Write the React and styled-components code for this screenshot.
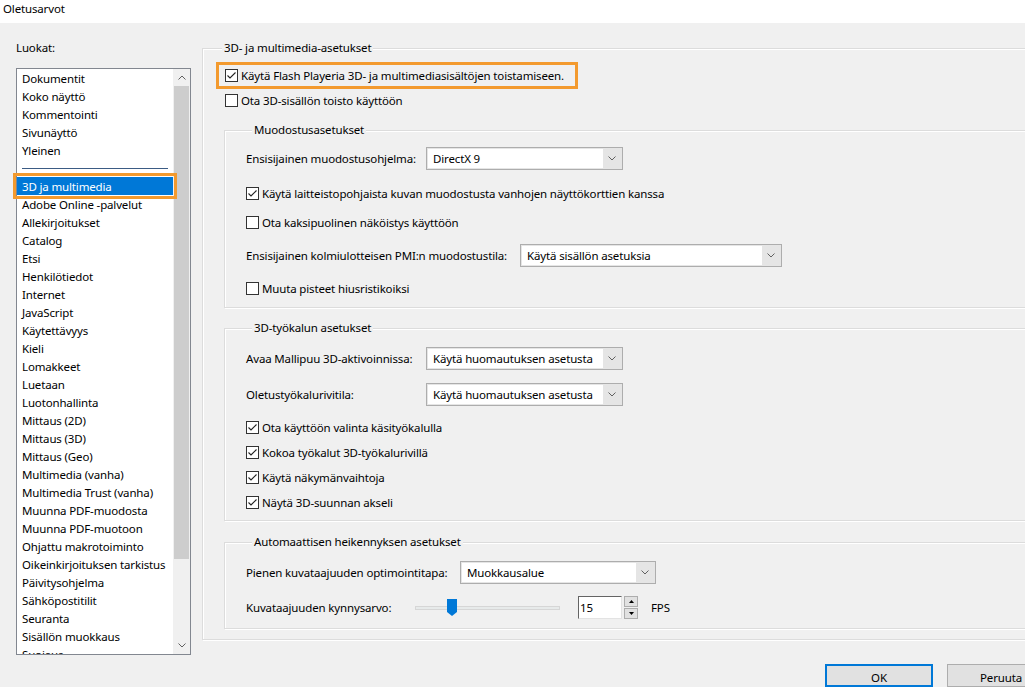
import React from 'react'
import styled, { createGlobalStyle } from 'styled-components'

const GlobalStyle = createGlobalStyle`
html, body {
  margin: 0;
  padding: 0;
}
body {
  width: 1025px;
  height: 687px;
  overflow: hidden;
  background: #f0f0f0;
  font-family: "Segoe UI", "Noto Sans", sans-serif;
  font-size: 11.5px;
  letter-spacing: -0.15px;
  color: #000;
}
`

const Window = styled.div`
width: 1025px;
height: 687px;
overflow: hidden;
display: flex;
flex-direction: column;
`

const TitleBar = styled.div`
height: 23px;
box-sizing: border-box;
background: #fff;
padding: 1px 0 0 3px;
line-height: 16px;
`

const Main = styled.div`
display: flex;
align-items: flex-start;
padding-left: 16px;
`

const LeftColumn = styled.div`
width: 175px;
flex-shrink: 0;
padding-top: 17px;
`

const Caption = styled.div`
line-height: 16px;
`

const ListBox = styled.div`
margin-top: 12px;
width: 175px;
height: 587px;
box-sizing: border-box;
border: 1px solid #828790;
background: #fff;
display: flex;
`

const Items = styled.div`
flex: 1;
height: 585px;
clip-path: inset(-8px -8px 0 -8px);
`

const Item = styled.div`
height: 18px;
line-height: 19px;
padding-left: 5px;
white-space: nowrap;
${p => p.$selected && `
  background: #0078d7;
  color: #fff;
  outline: 3px solid #f39a2e;
  outline-offset: 1px;
`}
`

const Divider = styled.div`
height: 18px;
display: flex;
align-items: center;
padding: 0 5px;
&::after {
  content: "";
  flex: 1;
  height: 1px;
  background: #3b5b84;
}
`

const ScrollBar = styled.div`
width: 17px;
background: #f0f0f0;
display: flex;
flex-direction: column;
`

const ScrollArrow = styled.div`
height: 17px;
display: flex;
align-items: center;
justify-content: center;
`

const Thumb = styled.div`
height: 473px;
margin: 0 1px;
background: #cdcdcd;
`

const Spacer = styled.div`
flex: 1;
`

const RightColumn = styled.div`
width: 900px;
flex-shrink: 0;
margin-left: 11px;
padding-top: 25px;
`

const Group = styled.div`
border: 1px solid #dcdcdc;
box-shadow: inset 1px 1px 0 #fff, 1px 1px 0 #fff;
margin-top: ${p => p.$top || 0}px;
margin-left: ${p => p.$left || 0}px;
padding: 0 0 ${p => p.$bottom || 0}px ${p => p.$pad || 0}px;
`

const GroupTitle = styled.div`
width: fit-content;
margin: -9px 0 0 ${p => p.$offset}px;
padding: 0 2px;
background: #f0f0f0;
line-height: 16px;
`

const Highlight = styled.div`
width: 362px;
height: 27px;
box-sizing: border-box;
margin-top: 6px;
border: 3px solid #f39a2e;
padding-left: 6px;
display: flex;
align-items: center;
`

const CheckRow = styled.label`
display: flex;
align-items: center;
height: 18px;
margin-top: ${p => p.$top || 0}px;
margin-left: ${p => p.$left || 0}px;
white-space: nowrap;
`

const Box = styled.span`
width: 13px;
height: 13px;
box-sizing: border-box;
border: 1px solid #333;
background: #fff;
margin-right: 3px;
display: flex;
align-items: center;
justify-content: center;
flex-shrink: 0;
`

const FieldRow = styled.div`
display: flex;
align-items: center;
height: 23px;
margin-top: ${p => p.$top || 0}px;
white-space: nowrap;
`

const FieldLabel = styled.div`
width: ${p => p.$width}px;
flex-shrink: 0;
`

const Select = styled.div`
width: ${p => p.$width}px;
height: 23px;
box-sizing: border-box;
border: 1px solid #adadad;
background: #e5e5e5;
padding: 1px;
display: flex;
`

const SelectValue = styled.div`
flex: 1;
background: #fff;
padding-left: 5px;
line-height: 19px;
`

const SelectArrow = styled.div`
width: 18px;
display: flex;
align-items: center;
justify-content: center;
`

const Slider = styled.div`
position: relative;
width: 145px;
height: 23px;
display: flex;
align-items: center;
`

const Track = styled.div`
width: 100%;
height: 2px;
background: #e7eaea;
border: 1px solid #d6d6d6;
`

const SliderThumb = styled.svg`
position: absolute;
top: 3px;
`

const NumberBox = styled.div`
margin-left: 18px;
width: 44px;
height: 23px;
box-sizing: border-box;
background: #fff;
border: 1px solid #e3e3e3;
border-top-color: #646464;
border-left-color: #646464;
padding-left: 1px;
line-height: 21px;
`

const Spin = styled.div`
margin-left: 2px;
width: 14px;
display: flex;
flex-direction: column;
gap: 1px;
`

const SpinButton = styled.div`
height: 11px;
box-sizing: border-box;
background: #e1e1e1;
border: 1px solid #adadad;
display: flex;
align-items: center;
justify-content: center;
`

const Unit = styled.span`
margin-left: 13px;
`

const ButtonRow = styled.div`
display: flex;
gap: 14px;
margin-top: 24px;
padding-left: 623px;
`

const Button = styled.div`
width: 108px;
height: 23px;
box-sizing: border-box;
padding-top: 3px;
background: #e1e1e1;
border: ${p => p.$primary ? '2px solid #0078d7' : '1px solid #adadad'};
display: flex;
align-items: center;
justify-content: center;
`

const Chevron = ({ up }) => (
  <svg width="8" height="5" viewBox="0 0 8 5">
    <path d={up ? 'M0.5 4.5 L4 1 L7.5 4.5' : 'M0.5 0.5 L4 4 L7.5 0.5'} fill="none" stroke="#606060" strokeWidth="1" />
  </svg>
)

const Check = ({ checked, children, top, left }) => (
  <CheckRow $top={top} $left={left}>
    <Box>
      {checked && (
        <svg width="11" height="11" viewBox="0 0 11 11">
          <path d="M1.5 5.5 L4 8 L9.5 2.5" fill="none" stroke="#222" strokeWidth="1.1" />
        </svg>
      )}
    </Box>
    {children}
  </CheckRow>
)

const Dropdown = ({ label, labelWidth, value, width, top }) => (
  <FieldRow $top={top}>
    <FieldLabel $width={labelWidth}>{label}</FieldLabel>
    <Select $width={width}>
      <SelectValue>{value}</SelectValue>
      <SelectArrow><Chevron /></SelectArrow>
    </Select>
  </FieldRow>
)

const before = ['Dokumentit', 'Koko näyttö', 'Kommentointi', 'Sivunäyttö', 'Yleinen']
const after = [
  'Adobe Online -palvelut', 'Allekirjoitukset', 'Catalog', 'Etsi', 'Henkilötiedot',
  'Internet', 'JavaScript', 'Käytettävyys', 'Kieli', 'Lomakkeet', 'Luetaan',
  'Luotonhallinta', 'Mittaus (2D)', 'Mittaus (3D)', 'Mittaus (Geo)', 'Multimedia (vanha)',
  'Multimedia Trust (vanha)', 'Muunna PDF-muodosta', 'Muunna PDF-muotoon',
  'Ohjattu makrotoiminto', 'Oikeinkirjoituksen tarkistus', 'Päivitysohjelma',
  'Sähköpostitilit', 'Seuranta', 'Sisällön muokkaus', 'Suojaus',
]

const threshold = 15

export default function App() {
  return (
    <Window>
      <GlobalStyle />
      <TitleBar>Oletusarvot</TitleBar>
      <Main>
        <LeftColumn>
          <Caption>Luokat:</Caption>
          <ListBox>
            <Items>
              {before.map(t => <Item key={t}>{t}</Item>)}
              <Divider />
              <Item $selected>3D ja multimedia</Item>
              {after.map(t => <Item key={t}>{t}</Item>)}
            </Items>
            <ScrollBar>
              <ScrollArrow><Chevron up /></ScrollArrow>
              <Thumb />
              <Spacer />
              <ScrollArrow><Chevron /></ScrollArrow>
            </ScrollBar>
          </ListBox>
        </LeftColumn>

        <RightColumn>
          <Group $pad={13} $bottom={10}>
            <GroupTitle $offset={6}>3D- ja multimedia-asetukset</GroupTitle>
            <Highlight>
              <Check checked>Käytä Flash Playeria 3D- ja multimediasisältöjen toistamiseen.</Check>
            </Highlight>
            <Check top={2} left={9}>Ota 3D-sisällön toisto käyttöön</Check>

            <Group $top={21} $left={8} $pad={21} $bottom={10}>
              <GroupTitle $offset={6}>Muodostusasetukset</GroupTitle>
              <Dropdown top={9} label="Ensisijainen muodostusohjelma:" labelWidth={180} value="DirectX 9" width={197} />
              <Check checked top={14}>Käytä laitteistopohjaista kuvan muodostusta vanhojen näyttökorttien kanssa</Check>
              <Check top={11}>Ota kaksipuolinen näköistys käyttöön</Check>
              <Dropdown top={13} label="Ensisijainen kolmiulotteisen PMI:n muodostustila:" labelWidth={274} value="Käytä sisällön asetuksia" width={262} />
              <Check top={12}>Muuta pisteet hiusristikoiksi</Check>
            </Group>

            <Group $top={20} $left={8} $pad={21} $bottom={9}>
              <GroupTitle $offset={6}>3D-työkalun asetukset</GroupTitle>
              <Dropdown top={11} label="Avaa Mallipuu 3D-aktivoinnissa:" labelWidth={180} value="Käytä huomautuksen asetusta" width={197} />
              <Dropdown top={13} label="Oletustyökalurivitila:" labelWidth={180} value="Käytä huomautuksen asetusta" width={197} />
              <Check checked top={12}>Ota käyttöön valinta käsityökalulla</Check>
              <Check checked top={7}>Kokoa työkalut 3D-työkalurivillä</Check>
              <Check checked top={7}>Käytä näkymänvaihtoja</Check>
              <Check checked top={7}>Näytä 3D-suunnan akseli</Check>
            </Group>

            <Group $top={21} $left={8} $pad={21} $bottom={9}>
              <GroupTitle $offset={6}>Automaattisen heikennyksen asetukset</GroupTitle>
              <Dropdown top={11} label="Pienen kuvataajuuden optimointitapa:" labelWidth={214} value="Muokkausalue" width={196} />
              <FieldRow $top={12}>
                <FieldLabel $width={169}>Kuvataajuuden kynnysarvo:</FieldLabel>
                <Slider>
                  <Track />
                  <SliderThumb width="10" height="17" viewBox="0 0 10 17" style={{ left: threshold * 2.1 }}>
                    <path d="M0 0 H10 V13 L5 17 L0 13 Z" fill="#0078d7" />
                  </SliderThumb>
                </Slider>
                <NumberBox>{threshold}</NumberBox>
                <Spin>
                  <SpinButton>
                    <svg width="5" height="3" viewBox="0 0 5 3"><path d="M0 3 L2.5 0 L5 3 Z" fill="#000" /></svg>
                  </SpinButton>
                  <SpinButton>
                    <svg width="5" height="3" viewBox="0 0 5 3"><path d="M0 0 L2.5 3 L5 0 Z" fill="#000" /></svg>
                  </SpinButton>
                </Spin>
                <Unit>FPS</Unit>
              </FieldRow>
            </Group>
          </Group>

          <ButtonRow>
            <Button $primary>OK</Button>
            <Button>Peruuta</Button>
          </ButtonRow>
        </RightColumn>
      </Main>
    </Window>
  )
}
